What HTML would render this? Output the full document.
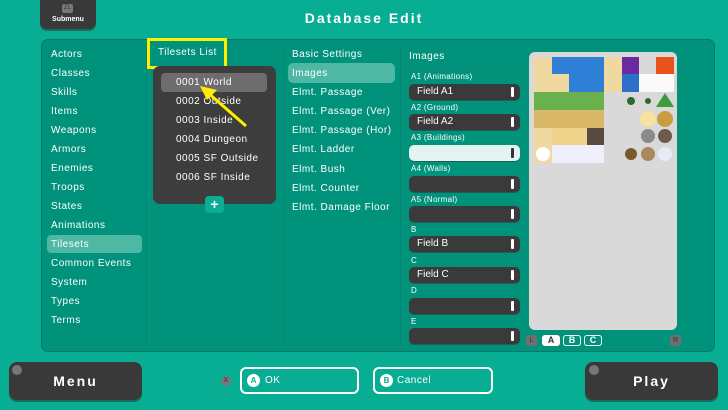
<!DOCTYPE html><html><head><style>
*{margin:0;padding:0;box-sizing:border-box}
body{width:728px;height:410px;background:#08ae94;font-family:"Liberation Sans",sans-serif;color:#fff;position:relative;overflow:hidden}
.a{position:absolute}
.t{font-size:10px;letter-spacing:.5px;white-space:nowrap}
.panel{left:41px;top:39px;width:674px;height:313px;background:#01927b;border-radius:7px;border:1px solid #047a67}
.sep{width:1px;background:#0a8471;top:45px;height:302px}
.fld{left:409px;width:111px;height:16px;background:#3a3a3a;border-radius:5px;box-shadow:0 1px 0 #1e5f55}
.fld span{position:absolute;left:8px;top:2px;font-size:10px}
.fld i{position:absolute;right:6px;top:3px;width:3px;height:10px;background:#fff;border-radius:1px}
.lbl{left:411px;font-size:8px;letter-spacing:.3px}
.btn{background:#393939;border-radius:8px;box-shadow:0 2px 0 #1d6a5e}
.ob{border:2px solid #fff;border-radius:6px;height:27px;top:367px}
.circ{width:13px;height:13px;border-radius:50%;background:#fff;color:#0aa98f;font-size:8px;font-weight:bold;text-align:center;line-height:13px}
</style></head><body>
<div class="a btn" style="left:40px;top:-8px;width:56px;height:37px;border-radius:7px"></div>
<div class="a" style="left:62px;top:4px;width:11px;height:9px;background:#777;border-radius:2px;font-size:6px;text-align:center;color:#333;line-height:9px">ZL</div>
<div class="a" style="left:40px;top:16px;width:56px;text-align:center;font-size:7px;font-weight:bold">Submenu</div>
<div class="a" style="left:0;width:728px;top:10px;text-align:center;font-size:14px;font-weight:bold;letter-spacing:2px">Database Edit</div>
<div class="a panel"></div>
<div class="a sep" style="left:146px"></div>
<div class="a sep" style="left:283px"></div>
<div class="a sep" style="left:400px"></div>
<div class="a" style="left:47px;top:235px;width:95px;height:18px;background:#4fb8a4;border-radius:4px"></div>
<div class="a t" style="left:51px;top:45px;line-height:19px">Actors<br>Classes<br>Skills<br>Items<br>Weapons<br>Armors<br>Enemies<br>Troops<br>States<br>Animations<br>Tilesets<br>Common Events<br>System<br>Types<br>Terms</div>
<div class="a" style="left:147px;top:38px;width:80px;height:31px;border:3px solid #ffee00"></div>
<div class="a t" style="left:158px;top:47px">Tilesets List</div>
<div class="a" style="left:153px;top:66px;width:123px;height:138px;background:#3d3d3d;border-radius:7px"></div>
<div class="a" style="left:161px;top:73px;width:106px;height:19px;background:#6d6d6d;border-radius:4px"></div>
<div class="a t" style="left:176px;top:73px;line-height:19px">0001 World<br>0002 Outside<br>0003 Inside<br>0004 Dungeon<br>0005 SF Outside<br>0006 SF Inside</div>
<svg class="a" style="left:195px;top:84px" width="55" height="45"><line x1="51" y1="42" x2="12" y2="8" stroke="#ffee00" stroke-width="3"/><polygon points="5,2 22,6 12,16" fill="#ffee00"/></svg>
<div class="a" style="left:205px;top:196px;width:19px;height:17px;background:#0bae94;border-radius:4px;text-align:center;font-weight:bold;font-size:14px;line-height:16px">+</div>
<div class="a" style="left:288px;top:63px;width:107px;height:20px;background:#4fb8a4;border-radius:5px"></div>
<div class="a t" style="left:292px;top:45px;line-height:19.1px">Basic Settings<br>Images<br>Elmt. Passage<br>Elmt. Passage (Ver)<br>Elmt. Passage (Hor)<br>Elmt. Ladder<br>Elmt. Bush<br>Elmt. Counter<br>Elmt. Damage Floor</div>
<div class="a t" style="left:409px;top:51px">Images</div>
<div class="a" style="left:408px;top:68px;width:114px;height:1px;background:#1a8372"></div>
<div class="a lbl" style="top:72px">A1 (Animations)</div><div class="a fld" style="top:84px"><span>Field A1</span><i></i></div>
<div class="a lbl" style="top:103px">A2 (Ground)</div><div class="a fld" style="top:114px"><span>Field A2</span><i></i></div>
<div class="a lbl" style="top:133px">A3 (Buildings)</div><div class="a fld" style="top:145px;background:#e3f3f0"><i style="background:#333"></i></div>
<div class="a lbl" style="top:164px">A4 (Walls)</div><div class="a fld" style="top:176px"><i></i></div>
<div class="a lbl" style="top:195px">A5 (Normal)</div><div class="a fld" style="top:206px"><i></i></div>
<div class="a lbl" style="top:225px">B</div><div class="a fld" style="top:236px"><span>Field B</span><i></i></div>
<div class="a lbl" style="top:256px">C</div><div class="a fld" style="top:267px"><span>Field C</span><i></i></div>
<div class="a lbl" style="top:286px">D</div><div class="a fld" style="top:298px"><i></i></div>
<div class="a lbl" style="top:317px">E</div><div class="a fld" style="top:328px"><i></i></div>
<div class="a" style="left:529px;top:52px;width:148px;height:278px;background:#d9d9d9;border-radius:6px"></div>
<svg class="a" style="left:534px;top:57px" width="140" height="106">
<rect x="0" y="0" width="70" height="106" fill="#f0d9a0"/>
<rect x="18" y="0" width="52" height="35" fill="#2f7fd6"/>
<rect x="18" y="17" width="17" height="18" fill="#f0d9a0"/>
<rect x="70" y="0" width="18" height="35" fill="#f0d9a0"/>
<rect x="88" y="0" width="17" height="17" fill="#6a2aa0"/>
<rect x="122" y="0" width="18" height="17" fill="#e8531c"/>
<rect x="88" y="17" width="17" height="18" fill="#2b6fc8"/>
<rect x="105" y="17" width="35" height="18" fill="#fafafa"/>
<rect x="0" y="35" width="70" height="18" fill="#69b14c"/>
<rect x="0" y="53" width="70" height="18" fill="#d9b86a"/>
<rect x="18" y="71" width="35" height="17" fill="#eed48a"/>
<rect x="53" y="71" width="17" height="17" fill="#5a4a40"/>
<rect x="18" y="88" width="52" height="18" fill="#eef0fb"/>
<circle cx="97" cy="44" r="4" fill="#2f6a2a"/><circle cx="114" cy="44" r="3" fill="#2f6a2a"/>
<polygon points="131,36 140,50 122,50" fill="#3d9a3d"/>
<circle cx="114" cy="62" r="8" fill="#f6e3a0"/><circle cx="131" cy="62" r="8" fill="#c89d3e"/>
<circle cx="114" cy="79" r="7" fill="#8a8a8a"/><circle cx="131" cy="79" r="7" fill="#6b5a4d"/>
<circle cx="97" cy="97" r="6" fill="#7a5a2a"/><circle cx="114" cy="97" r="7" fill="#a88a5a"/><circle cx="131" cy="97" r="7" fill="#e8eaf6"/>
<circle cx="9" cy="97" r="7" fill="#fff"/>
</svg>
<div class="a" style="left:526px;top:335px;width:11px;height:11px;background:#6f6f6f;border-radius:2px;font-size:7px;text-align:center;line-height:11px;color:#333">L</div>
<div class="a" style="left:542px;top:335px;width:18px;height:11px;background:#fff;border-radius:3px;font-size:9px;font-weight:bold;color:#333;text-align:center;line-height:11px">A</div>
<div class="a" style="left:563px;top:335px;width:18px;height:11px;border:1px solid #fff;border-radius:3px;font-size:9px;font-weight:bold;text-align:center;line-height:9px">B</div>
<div class="a" style="left:584px;top:335px;width:18px;height:11px;border:1px solid #fff;border-radius:3px;font-size:9px;font-weight:bold;text-align:center;line-height:9px">C</div>
<div class="a" style="left:670px;top:335px;width:11px;height:11px;background:#6f6f6f;border-radius:2px;font-size:7px;text-align:center;line-height:11px;color:#333">R</div>
<div class="a btn" style="left:9px;top:362px;width:133px;height:38px"></div>
<div class="a" style="left:12px;top:365px;width:10px;height:10px;border-radius:50%;background:#777"></div>
<div class="a" style="left:9px;top:373px;width:133px;text-align:center;font-size:14px;font-weight:bold;letter-spacing:2px">Menu</div>
<div class="a btn" style="left:585px;top:362px;width:133px;height:38px"></div>
<div class="a" style="left:589px;top:365px;width:10px;height:10px;border-radius:50%;background:#777"></div>
<div class="a" style="left:585px;top:373px;width:133px;text-align:center;font-size:14px;font-weight:bold;letter-spacing:2px">Play</div>
<div class="a" style="left:221px;top:376px;width:10px;height:10px;border-radius:50%;background:#777;font-size:7px;text-align:center;line-height:10px;color:#333">X</div>
<div class="a ob" style="left:240px;width:119px"></div>
<div class="a circ" style="left:247px;top:374px">A</div>
<div class="a t" style="left:265px;top:375px">OK</div>
<div class="a ob" style="left:373px;width:120px"></div>
<div class="a circ" style="left:380px;top:374px">B</div>
<div class="a t" style="left:397px;top:375px">Cancel</div>
</body></html>
